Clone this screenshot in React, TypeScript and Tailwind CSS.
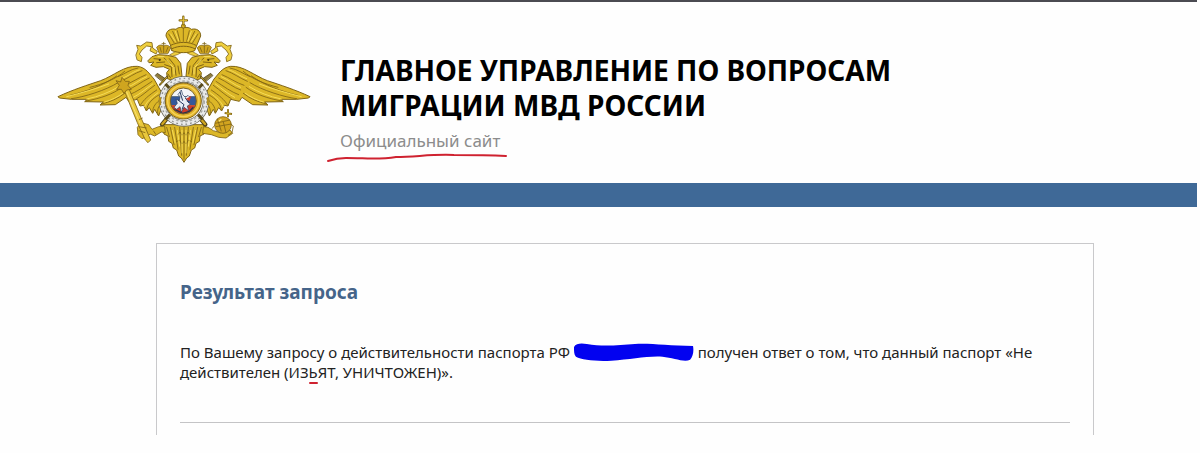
const GOLD = "#dcb727";
const DARK = "#806414";

// left half of the eagle, mirrored for the right one
const Wing = () => (
  <g>
    <path
      d="M24 260 C66 240 116 224 152 212 C190 198 224 166 262 169 C288 172 298 192 312 207 L334 246 L336 290 L326 318 L314 298 L308 310 L298 293 L289 303 L281 286 L270 288 L262 268 L236 274 L228 262 L196 284 L150 285 L160 276 L104 275 L112 268 L64 268 L28 264 Z"
      fill={GOLD}
      stroke={DARK}
      strokeWidth="3"
      strokeLinejoin="round"
    />
    <g fill="none" stroke={DARK} strokeWidth="2.5" strokeLinecap="round">
      <path d="M64 266 C100 262 170 240 204 218 M108 273 C150 266 190 252 216 232 M154 282 C180 276 204 266 224 250" />
      <path d="M60 256 C110 244 160 226 200 198 M120 232 C160 222 200 206 224 184" />
      <path d="M204 200 C228 190 240 178 264 174 M212 214 C236 204 252 190 276 182 M222 226 C246 218 264 204 288 194" />
      <path d="M232 240 C252 234 272 216 298 204 M238 254 C260 246 282 230 306 214 M260 266 C276 258 292 242 314 226" />
      <path d="M272 284 C280 270 296 256 320 240 M290 300 C292 282 304 268 328 254 M308 306 C308 290 318 278 332 268 M324 314 C320 300 326 288 334 280" />
    </g>
    <g fill="none" stroke="#f6dc58" strokeWidth="3" strokeLinecap="round">
      <path d="M50 260 C96 248 140 236 176 222 M110 267 C146 260 180 246 206 230 M164 276 C186 270 204 260 218 250" />
      <path d="M214 206 C240 196 250 184 268 180 M232 232 C250 226 270 208 290 200 M250 262 C270 252 288 236 308 222 M284 290 C290 274 306 262 324 248" />
    </g>
  </g>
);

const Head = () => (
  <g strokeLinejoin="round" strokeLinecap="round">
    <path
      d="M262 150 L274 155 L276 142 L268 132 L276 120 L290 108 L304 110 L300 122 L318 132 L322 124 L308 114 L306 98 L290 96 L272 108 L260 106 L264 118 L258 134 Z"
      fill="#efcf3e"
      stroke={DARK}
      strokeWidth="2.5"
    />
    <path
      d="M294 152 L306 140 L324 134 L352 136 L378 142 L392 160 L396 198 L378 214 L352 206 L350 188 L358 178 L340 170 L318 172 L302 166 L312 156 L298 158 Z"
      fill={GOLD}
      stroke={DARK}
      strokeWidth="3"
    />
    <path
      d="M312 146 L332 148 M320 158 L344 156 M342 144 L362 162 M358 146 L374 166 L378 196 M364 172 L366 200 M344 164 L362 170 M384 168 L388 192 M354 192 L362 204"
      fill="none"
      stroke={DARK}
      strokeWidth="3"
    />
    <path d="M350 150 L368 170 M372 172 L372 192 M324 140 L342 140" fill="none" stroke="#f8e169" strokeWidth="3" />
    <circle cx="329" cy="150" r="3" fill="#4a3a10" />
    {/* small crown */}
    <path d="M328 130 L320 112 C326 104 336 104 341 108 C348 104 358 106 362 114 L354 130 Z" fill="#cfa51f" stroke={DARK} strokeWidth="2.5" />
    <path d="M341 97 V128 M336 101 H346 M330 112 L334 126 M354 112 L348 126" stroke={DARK} strokeWidth="2.5" fill="none" />
    <path d="M360 134 L378 124 L398 118 L398 126 L382 134 L368 138 Z" fill="#efcf3e" stroke={DARK} strokeWidth="2" />
    {/* sword hilt */}
    <path d="M316 196 L322 190 L346 206 L340 216 Z" fill="#8f7b3a" stroke="#4f431c" strokeWidth="2.5" />
    <path d="M330 224 L352 200" stroke="#4f431c" strokeWidth="6" />
    <path d="M331 223 L351 201" stroke="#d4ad2a" strokeWidth="3" />
  </g>
);

const Emblem = () => (
  <svg viewBox="0 0 810 480" className="w-[270px] shrink-0" role="img" aria-label="Эмблема МВД России">
    <Wing />
    <g transform="translate(804 0) scale(-1 1)">
      <Wing />
    </g>

    {/* tail */}
    <path
      d="M336 344 L468 344 L462 372 L450 378 L448 394 L438 400 L434 414 L424 420 L418 438 L410 444 L402 457 L394 444 L386 438 L380 420 L370 414 L366 400 L356 394 L354 378 L342 372 Z"
      fill={GOLD}
      stroke={DARK}
      strokeWidth="3"
      strokeLinejoin="round"
    />
    <path
      d="M402 352 V448 M389 352 L395 436 M415 352 L409 436 M374 352 L384 418 M430 352 L420 418 M361 352 L372 404 M443 352 L432 404 M350 352 L358 380 M454 352 L446 380 M384 374 L390 366 L396 376 L402 368 L408 376 L414 366 L420 374 M378 396 L388 390 L396 402 L402 394 L408 402 L416 390 L426 396"
      fill="none"
      stroke={DARK}
      strokeWidth="2.5"
      strokeLinecap="round"
    />
    <path d="M396 360 V430 M408 360 V430 M382 360 L389 410 M422 360 L415 410 M367 360 L376 400 M437 360 L428 400" stroke="#f6dc58" strokeWidth="3" fill="none" />

    <Head />
    <g transform="translate(804 0) scale(-1 1)">
      <Head />
    </g>

    {/* big crown */}
    <g stroke={DARK} strokeLinejoin="round" strokeLinecap="round">
      <path
        d="M366 122 L360 102 L348 78 C348 62 362 54 378 58 C386 50 396 52 400 54 C406 52 416 50 424 58 C440 54 452 62 452 78 L442 102 L434 122 C414 130 386 130 366 122 Z"
        fill={GOLD}
        strokeWidth="3"
      />
      <path d="M362 106 C386 94 416 94 438 106 M366 116 C386 106 416 106 434 116" fill="none" strokeWidth="3" />
      <path d="M356 72 L372 98 M368 64 L382 96 M382 62 L390 94 M444 72 L428 98 M434 64 L418 96 M418 62 L410 94 M400 56 V94" fill="none" strokeWidth="2.5" />
      <path d="M362 72 L376 94 M376 64 L386 92 M438 72 L424 94 M424 64 L414 92" fill="none" stroke="#f6dc58" strokeWidth="3" />
      <circle cx="400" cy="48" r="6" fill={GOLD} strokeWidth="2.5" />
      <path d="M400 20 V43 M389 31 H411" strokeWidth="7" />
      <path d="M400 21 V42 M390 31 H410" stroke="#e6c435" strokeWidth="3" />
    </g>

    {/* crossed swords behind the shield, then the chain */}
    <path d="M336 344 L352 324 M466 344 L450 324" stroke="#4f431c" strokeWidth="13" strokeLinecap="round" />
    <path d="M337 342 L353 323 M465 342 L449 323" stroke="#cfa51f" strokeWidth="7" strokeLinecap="round" />
    <circle cx="402" cy="274" r="66" fill="none" stroke="#6d6a5c" strokeWidth="20" />
    <circle cx="402" cy="274" r="66" fill="none" stroke="#e9eaea" strokeWidth="15" />
    <circle cx="402" cy="274" r="69" fill="none" stroke="#8d8e8c" strokeWidth="4" strokeDasharray="5 9" />
    <circle cx="402" cy="274" r="61" fill="none" stroke="#a9aaa6" strokeWidth="4" strokeDasharray="8 6" />
    <path d="M346 222 L358 234 M458 222 L446 234 M346 328 L360 314 M458 328 L444 314" stroke="#5a4c1c" strokeWidth="9" />
    <path d="M330 262 V286 M474 262 V286" stroke="#b08d1d" strokeWidth="7" />
    <circle cx="400" cy="273" r="54" fill="#e2b52b" stroke="#7d6115" strokeWidth="3" />
    <circle cx="400" cy="273" r="47" fill="none" stroke="#f5d35b" strokeWidth="4" />

    {/* St George on the tricolour */}
    <clipPath id="shield">
      <circle cx="400" cy="273" r="39" />
    </clipPath>
    <g clipPath="url(#shield)">
      <path d="M360 233 H440 V259 H360 Z" fill="#f4f5f8" />
      <path d="M360 259 H440 V286 H360 Z" fill="#34589b" />
      <path d="M360 286 H440 V314 H360 Z" fill="#cf3b2c" />
      <path d="M372 292 L382 280 L378 268 L388 272 L390 260 L384 254 L394 240 L398 254 L406 262 L414 256 L420 262 L412 274 L422 282 L412 288 L416 302 L402 292 L394 306 L390 290 L380 298 Z" fill="#e8edf4" stroke="#26395e" strokeWidth="2" />
      <path d="M406 264 L418 280 M384 270 L402 284 L396 298 M390 246 L398 272" stroke="#24365c" strokeWidth="3" fill="none" />
      <path d="M408 266 L424 258 L418 274 Z" fill="#cf3b2c" />
      <path d="M366 298 L382 302 L398 310 L418 304 L430 292" stroke="#26334d" strokeWidth="4" fill="none" />
    </g>
    <circle cx="400" cy="273" r="39" fill="none" stroke="#776026" strokeWidth="3" />

    {/* sceptre */}
    <g stroke={DARK} strokeWidth="2.5" strokeLinejoin="round">
      <path d="M344 348 L326 350 L306 358 L296 344 L274 338 L262 352 L264 374 L276 386 L292 380 L300 372 L314 378 L334 366 L346 368 Z" fill={GOLD} />
      <path d="M222 240 L236 234 L276 330 L302 390 L294 398 L286 390 L262 338 Z" fill="#e9c83c" />
      <path d="M198 212 L212 216 L216 202 L226 214 L238 214 L234 226 L244 238 L230 240 L222 250 L214 238 L200 238 L208 226 Z" fill="#cfa51f" />
      <path d="M264 330 L278 324 M266 350 L290 354 M266 362 L286 368 M310 362 L318 374" fill="none" />
      <path d="M230 246 L270 340" stroke="#fbe77c" />
    </g>

    {/* orb */}
    <g stroke={DARK} strokeWidth="2.5" strokeLinejoin="round">
      <path d="M460 350 L474 352 L490 362 L512 368 L540 360 L548 370 L528 384 L506 382 L484 374 L458 370 Z" fill={GOLD} />
      <circle cx="519" cy="345" r="25" fill="#d2a41f" />
      <path d="M496 340 L522 334 L540 330 M498 350 L544 342 M520 336 L528 368 M502 326 L514 364" fill="none" />
      <path d="M534 298 V322 M524 309 L546 312" strokeWidth="6" />
      <path d="M534 300 V320 M526 309 L544 312" stroke="#e6c435" strokeWidth="2" />
      <path d="M542 342 L550 348 L546 368 L534 376 M486 356 L494 346" fill="none" />
      <path d="M506 334 L514 328" stroke="#fbe77c" strokeWidth="4" />
    </g>
  </svg>
);

const Header = () => (
  <header className="flex gap-5 border-t-2 border-[#4b4b52] pt-2 pr-5 pb-[13px] pl-[50px]">
    <Emblem />
    <div className="pt-[43px]">
      <h1 className="max-w-[600px] text-[28px] leading-[35px] font-bold text-black">
        ГЛАВНОЕ УПРАВЛЕНИЕ ПО ВОПРОСАМ МИГРАЦИИ МВД РОССИИ
      </h1>
      <p className="relative w-fit pt-0.5 text-[17px] leading-8 text-[#8c8c8c]">
        Официальный сайт
        <svg viewBox="0 0 182 10" className="absolute -bottom-1.5 -left-3.5 w-[182px]" aria-hidden="true">
          <path d="M2 8 C8 6 12 5 20 5 C40 5 52 7 70 4 C90 4 105 1 128 2 C146 2 160 2 180 3" fill="none" stroke="#cf2230" strokeWidth="2" strokeLinecap="round" />
        </svg>
      </p>
    </div>
  </header>
);

const App = () => {
  return (
    <div className="bg-[#fefefe] pr-[3px] pb-[18px] font-['Noto_Sans',sans-serif]">
      <Header />
      <div className="h-6 bg-[#3f6997]" />

      <main className="pt-9 pr-[103px] pl-[156px]">
        <section className="border-x border-t border-[#c9c9cb] px-[23px] pt-8 pb-3">
          <h2 className="text-[19px] leading-8 font-bold text-[#456489]">Результат запроса</h2>
          <p className="mt-[34px] text-[15px] leading-5 text-[#222222]">
            По Вашему запросу о действительности паспорта РФ{" "}
            <svg viewBox="0 0 122 20" className="-mt-2 -mb-1 inline-block w-[120px] align-middle" aria-hidden="true">
              <path
                d="M0 5 C2 1 8 1 13 2 C30 5 46 3 62 2 C78 1 96 4 121 4 C122 9 121 15 118 18 C112 21 101 16 90 15 C74 14 58 18 38 19 C22 20 8 18 2 15 C0 13 0 9 0 5 Z"
                fill="#0202f0"
              />
            </svg>{" "}
            получен ответ о том, что данный паспорт «Не действителен (ИЗ
            <span className="relative">
              Ь
              <span className="absolute inset-x-0 -bottom-0.5 h-0.5 rounded-full bg-[#cf2230]" />
            </span>
            ЯТ, УНИЧТОЖЕН)».
          </p>
          <hr className="mt-10 border-[#c4c4c6]" />
        </section>
      </main>
    </div>
  );
};

export default App;
